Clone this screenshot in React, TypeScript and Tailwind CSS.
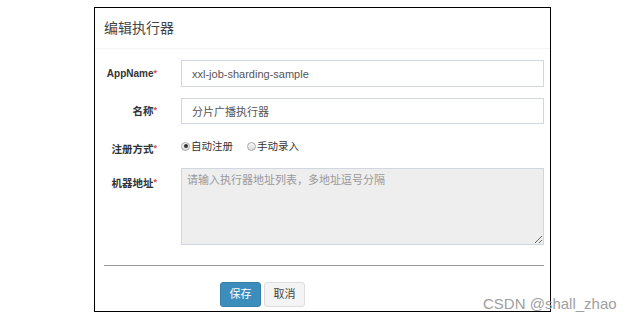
import React from 'react';

const Star = () => <span className="text-[#dd4b39] text-[9px] align-top relative -top-[1px]">*</span>;

const Label: React.FC<{ text: string; pt?: string; size?: string }> = ({ text, pt = '', size = 'text-[10.5px]' }) => (
  <div className={`w-[62px] shrink-0 text-right font-bold ${size} leading-[14px] text-[#333] ${pt}`}>
    {text}
    <Star />
  </div>
);

const Radio: React.FC<{ checked?: boolean; label: string }> = ({ checked, label }) => (
  <label className="flex items-center gap-[1px] text-[10.5px] leading-[14px] text-[#333]">
    <span className="w-[9px] h-[9px] rounded-full border border-[#a9a9a9] bg-gradient-to-b from-[#f8f8f8] to-[#dcdcdc] flex items-center justify-center">
      {checked && <span className="w-[4px] h-[4px] rounded-full bg-[#333]" />}
    </span>
    <span>{label}</span>
  </label>
);

export default function App() {
  return (
    <div className="relative w-[634px] h-[322px] bg-white overflow-hidden font-['Liberation_Sans','Noto_Sans_CJK_SC',sans-serif]">
      <div className="ml-[94px] mt-[7px] w-[457px] h-[305px] border border-black">
        {/* header */}
        <div className="h-[41px] border-b border-[#f4f4f4] pl-[9px] flex items-center">
          <h3 className="text-[14px] text-[#444]">编辑执行器</h3>
        </div>

        <div className="pt-[11px]">
          <div className="flex items-center gap-[24px]">
            <Label text="AppName" size="text-[10px]" />
            <input
              readOnly
              value="xxl-job-sharding-sample"
              className="w-[363px] h-[27px] border border-[#d2d6de] pl-[10px] text-[11px] text-[#555] outline-none"
            />
          </div>

          <div className="flex items-center gap-[24px] mt-[11px]">
            <Label text="名称" />
            <input
              readOnly
              value="分片广播执行器"
              className="w-[363px] h-[26px] border border-[#d2d6de] pl-[10px] text-[11px] text-[#555] outline-none"
            />
          </div>

          <div className="flex items-start gap-[24px] mt-[12px] h-[22px]">
            <Label text="注册方式" pt="pt-[6px]" />
            <div className="flex gap-[14px] pt-[3px]">
              <Radio checked label="自动注册" />
              <Radio label="手动录入" />
            </div>
          </div>

          <div className="flex items-start gap-[24px] mt-[10px]">
            <Label text="机器地址" pt="pt-[8px]" />
            <textarea
              readOnly
              placeholder="请输入执行器地址列表，多地址逗号分隔"
              className="w-[363px] h-[77px] bg-[#eeeeee] border border-[#d2d6de] px-[5px] py-[3px] text-[11px] leading-[16px] placeholder:text-[#999] outline-none"
            />
          </div>

          <div className="ml-[9px] mr-[6px] mt-[20px] border-t border-[#999]" />

          <div className="mt-[16px] pl-[125px] flex gap-[3px]">
            <button className="w-[41px] h-[25px] rounded-[3px] bg-[#3c8dbc] border border-[#367fa9] text-white text-[11px]">
              保存
            </button>
            <button className="w-[41px] h-[25px] rounded-[3px] bg-[#f4f4f4] border border-[#ddd] text-[#444] text-[11px]">
              取消
            </button>
          </div>
        </div>
      </div>

      <div className="absolute left-[483px] top-[295px] text-[15px] leading-[18px] text-[#a0a0a0]">
        CSDN @shall_zhao
      </div>
    </div>
  );
}
